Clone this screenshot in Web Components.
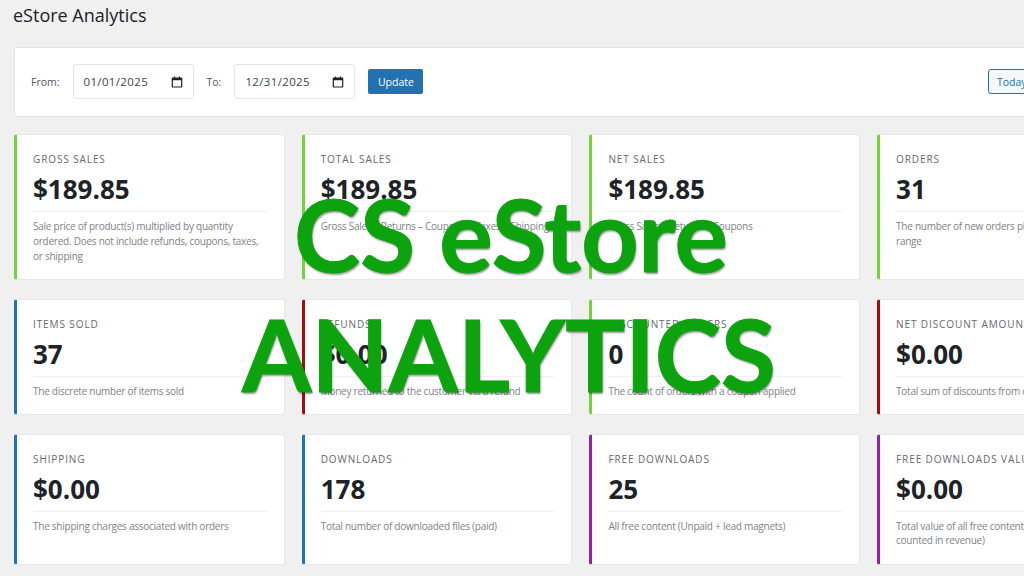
<!DOCTYPE html>
<html>
<head>
<meta charset="utf-8">
<title>eStore Analytics</title>
<style>
    html, body { margin: 0; height: 100%; overflow: hidden; background: #f0f0f1; }
    body { font-family: "Open Sans", "Noto Sans", sans-serif; }
</style>
</head>
<body>
<analytics-page>
    <span slot="title">eStore Analytics</span>
    <filter-bar slot="filter"></filter-bar>
    <stat-card accent="green" label="Gross Sales" value="$189.85">Sale price of product(s) multiplied by quantity ordered. Does not include refunds, coupons, taxes, or shipping</stat-card>
    <stat-card accent="green" label="Total Sales" value="$189.85">Gross Sales – Returns – Coupons + Taxes + Shipping</stat-card>
    <stat-card accent="green" label="Net Sales" value="$189.85">Gross Sales – Returns – Coupons</stat-card>
    <stat-card accent="green" label="Orders" value="31">The number of new orders placed within the date<br>range</stat-card>
    <stat-card accent="blue" label="Items Sold" value="37">The discrete number of items sold</stat-card>
    <stat-card accent="red" label="Refunds" value="$0.00">Money returned to the customer via a refund</stat-card>
    <stat-card accent="green" label="Discounted Orders" value="0">The count of orders with a coupon applied</stat-card>
    <stat-card accent="red" label="Net Discount Amount" value="$0.00">Total sum of discounts from coupons</stat-card>
    <stat-card accent="blue" label="Shipping" value="$0.00">The shipping charges associated with orders</stat-card>
    <stat-card accent="blue" label="Downloads" value="178">Total number of downloaded files (paid)</stat-card>
    <stat-card accent="purple" label="Free Downloads" value="25">All free content (Unpaid + lead magnets)</stat-card>
    <stat-card accent="purple" label="Free Downloads Value" value="$0.00">Total value of all free content (not<br>counted in revenue)</stat-card>
</analytics-page>
<banner-title></banner-title>
<script>
class AnalyticsPage extends HTMLElement {
    constructor() {
        super()
        this.attachShadow({ mode: "open" })
        this.shadowRoot.innerHTML = `
            <style>
                :host { display: block; width: 1148px; padding: 3px 0 0 14px; }
                h1 { margin: 0 0 0 -1px; font-size: 18px; line-height: 24px; font-weight: 400; color: #1d2327; }
                .filter { margin-top: 20px; }
                .grid {
                    margin-top: 17px;
                    display: grid;
                    grid-template-columns: repeat(4, 270.500px);
                    column-gap: 17.2px;
                    row-gap: 18.2px;
                }
            </style>
            <h1><slot name="title"></slot></h1>
            <div class="filter"><slot name="filter"></slot></div>
            <div class="grid"><slot></slot></div>
        `
    }
}

class FilterBar extends HTMLElement {
    constructor() {
        super()
        this.attachShadow({ mode: "open" })
        this.shadowRoot.innerHTML = `
            <style>
                :host {
                    display: flex;
                    align-items: center;
                    height: 70px;
                    box-sizing: border-box;
                    padding: 0 16px 1px;
                    background: #fff;
                    border: 1px solid #e2e4e7;
                    border-radius: 3px;
                    font-size: 10.5px;
                    color: #50575e;
                }
                .to { margin-left: 13px; }
                date-field { margin-left: 13px; }
                .to + date-field { margin-left: 13px; }
                .update {
                    margin-left: 13px;
                    height: 25px;
                    width: 55px;
                    display: flex;
                    align-items: center;
                    justify-content: center;
                    border-radius: 2px;
                    background: #2271b1;
                    color: #fff;
                }
                .today {
                    margin-left: auto;
                    margin-right: 97px;
                    height: 25px;
                    width: 60px;
                    box-sizing: border-box;
                    padding-left: 8px;
                    display: flex;
                    align-items: center;
                    border: 1px solid #2271b1;
                    border-radius: 3px;
                    color: #2271b1;
                    background: #f6f7f7;
                }
            </style>
            <span>From:</span>
            <date-field>01/01/2025</date-field>
            <span class="to">To:</span>
            <date-field>12/31/2025</date-field>
            <span class="update">Update</span>
            <span class="today">Today</span>
        `
    }
}

class DateField extends HTMLElement {
    constructor() {
        super()
        this.attachShadow({ mode: "open" })
        this.shadowRoot.innerHTML = `
            <style>
                :host {
                    display: flex;
                    align-items: center;
                    justify-content: space-between;
                    width: 121px;
                    height: 35px;
                    box-sizing: border-box;
                    padding: 0 10px;
                    background: #fff;
                    border: 1px solid #e4e5e7;
                    border-radius: 3px;
                    font-size: 11.5px;
                    letter-spacing: .35px;
                    color: #3c434a;
                }
                svg { width: 12px; height: 12px; display: block; }
            </style>
            <slot></slot>
            <svg viewBox="0 0 12 12"><path fill="#1d2327" d="M1.5 1.5h1.5V.5h1.2v1h3.6v-1H9v1h1.5c.4 0 .8.4.8.8v8.4c0 .4-.4.8-.8.8h-9c-.4 0-.8-.4-.8-.8V2.300c0-.4.400-.8.800-.8zM1.900 4.300v6.300h8.200V4.300z"/></svg>
        `
    }
}

const accents = { green: "#72d33c", blue: "#2271b1", red: "#a80b0b", purple: "#8f24ab" }

class StatCard extends HTMLElement {
    constructor() {
        super()
        this.attachShadow({ mode: "open" })
        const accent = accents[this.getAttribute("accent")]
        this.shadowRoot.innerHTML = `
            <style>
                :host {
                    display: block;
                    box-sizing: border-box;
                    padding: 16px 16px 16px 16px;
                    background: #fff;
                    border: 1px solid #e6e7e9;
                    border-left: 3px solid ${accent};
                    border-radius: 3px;
                }
                .label {
                    font-size: 10px;
                    line-height: 16px;
                    letter-spacing: .9px;
                    text-transform: uppercase;
                    white-space: nowrap;
                    color: #646970;
                }
                .value {
                    margin-top: 5px;
                    padding-bottom: 4px;
                    border-bottom: 1px solid #f0f0f1;
                    font-size: 26px;
                    line-height: 35px;
                    font-weight: 700;
                    color: #1d2327;
                }
                .desc {
                    margin-top: 7px;
                    font-size: 10px;
                    letter-spacing: -.25px;
                    line-height: 14.8px;
                    color: #7e8388;
                }
            </style>
            <div class="label">${this.getAttribute("label")}</div>
            <div class="value">${this.getAttribute("value")}</div>
            <div class="desc"><slot></slot></div>
        `
    }
}

class BannerTitle extends HTMLElement {
    constructor() {
        super()
        this.attachShadow({ mode: "open" })
        this.shadowRoot.innerHTML = `
            <style>
                :host {
                    position: absolute;
                    left: 0;
                    top: 0;
                    width: 1024px;
                    font-family: Lato, "Open Sans", sans-serif;
                    font-weight: 700;
                    color: #0ca30f;
                    -webkit-text-stroke: 1px #0ca30f;
                    text-shadow: 1px 2px 2px rgba(0, 0, 0, .4);
                    pointer-events: none;
                }
                div { position: absolute; white-space: nowrap; font-size: 100px; line-height: 100px; }
                .one { left: 294px; top: 183px; }
                .two { left: 242px; top: 303px; }
            </style>
            <div class="one">CS eStore</div>
            <div class="two">ANALYTICS</div>
        `
    }
}

customElements.define("analytics-page", AnalyticsPage)
customElements.define("filter-bar", FilterBar)
customElements.define("date-field", DateField)
customElements.define("stat-card", StatCard)
customElements.define("banner-title", BannerTitle)
</script>
</body>
</html>
